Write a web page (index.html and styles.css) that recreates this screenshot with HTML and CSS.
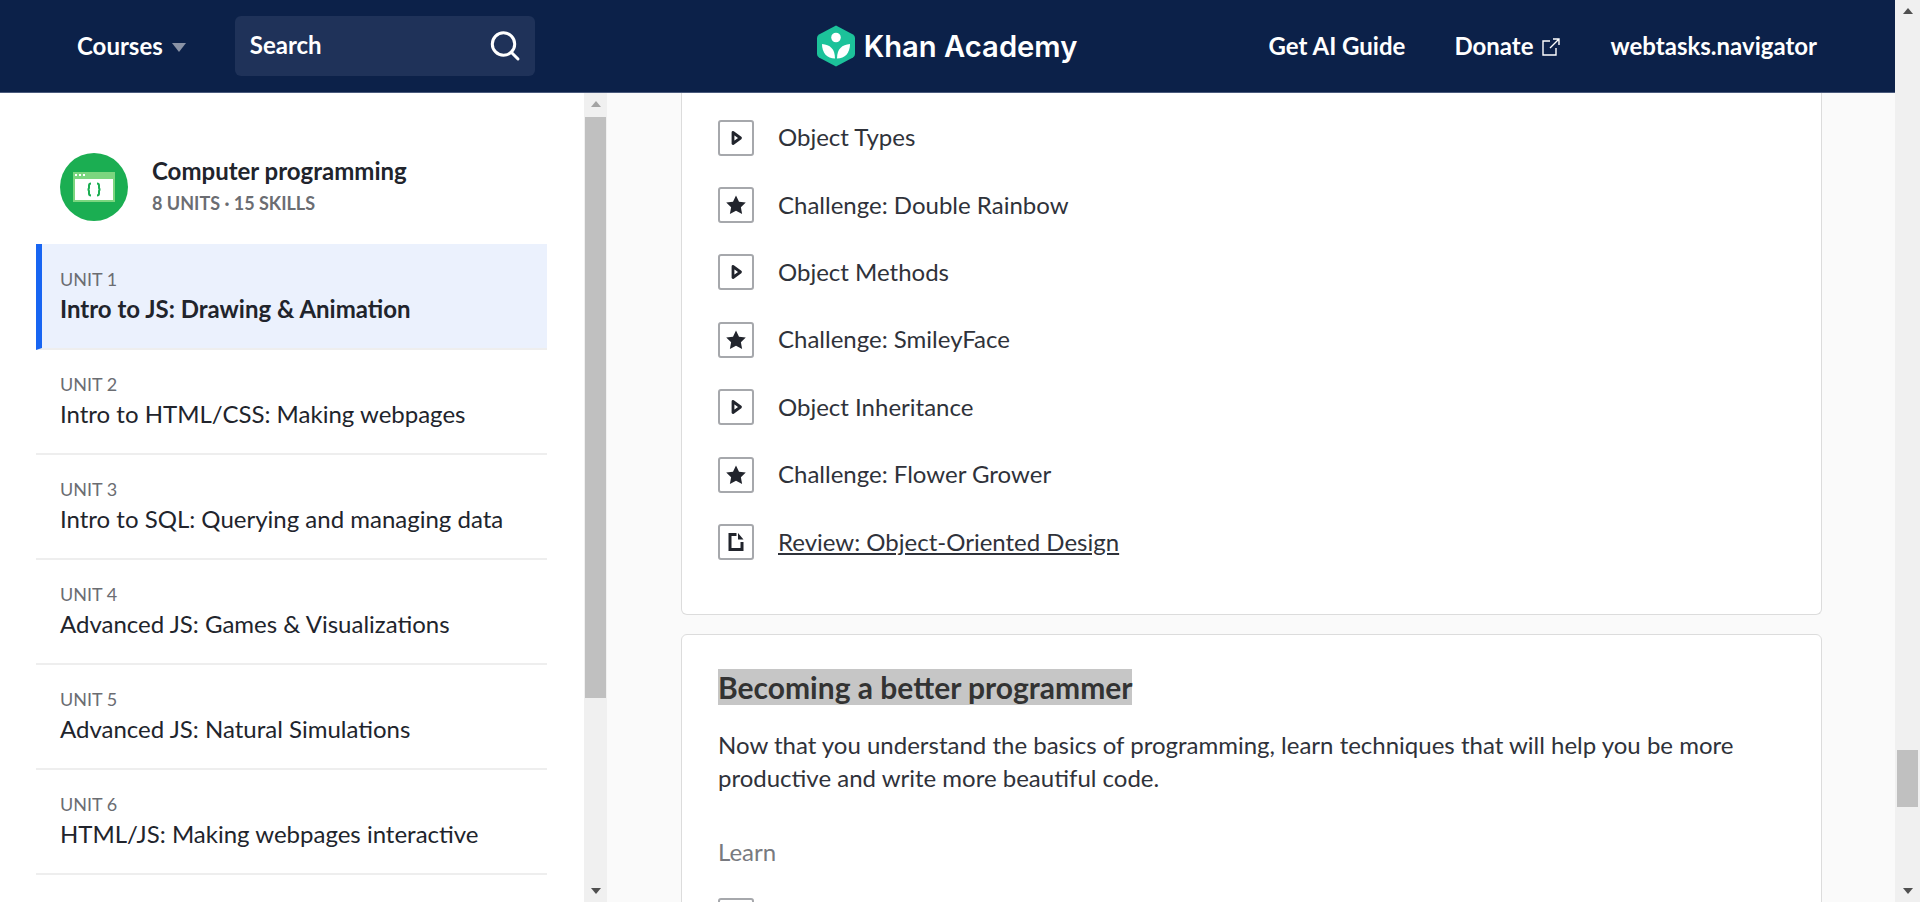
FILE: index.html
```html
<!DOCTYPE html>
<html>
<head>
    <meta charset="utf-8">
    <title>Computer programming | Khan Academy</title>
    <link rel="stylesheet" href="styles.css">
</head>
<body>
    <div class="page">
        <div class="page-body">
            <header class="topbar">
                <div class="topbar-left">
                    <a class="courses">Courses<span class="caret"></span></a>
                    <div class="search">
                        <span>Search</span>
                        <svg width="32" height="32" viewBox="0 0 32 32" fill="none" stroke="#fff" stroke-width="3" stroke-linecap="round"><circle cx="14.5" cy="14" r="11.2"/><path d="M22.5 22.5L29 29"/></svg>
                    </div>
                </div>
                <a class="logo">
                    <svg width="38" height="42" viewBox="0 0 38 42">
                        <path d="M19 0.5L36 9.5Q38 10.6 38 13V29Q38 31.4 36 32.5L19 41.5L2 32.5Q0 31.4 0 29V13Q0 10.6 2 9.5Z" fill="#1cc29a"/>
                        <circle cx="19" cy="12.500" r="4.800" fill="#fff"/>
                        <path d="M18 33.500C10 33.500 5 28 5 19C13 19.500 18 24 18 33.500Z" fill="#fff"/>
                        <path d="M20 33.500C28 33.500 33 28 33 19C25 19.500 20 24 20 33.500Z" fill="#fff"/>
                    </svg>
                    <span>Khan Academy</span>
                </a>
                <nav class="topbar-right">
                    <a>Get AI Guide</a>
                    <a class="donate">Donate
                        <svg width="20" height="20" viewBox="0 0 20 20" fill="none" stroke="#fff" stroke-width="1.4"><path d="M9 4H2V18H15V11"/><path d="M9 11L18 2M12 2H18V8"/></svg>
                    </a>
                    <a>webtasks.navigator</a>
                </nav>
            </header>
            <div class="content">
                <aside class="sidebar">
                    <div class="course-head">
                        <svg width="68" height="68" viewBox="0 0 68 68">
                            <circle cx="34" cy="34" r="34" fill="#1bae52"/>
                            <rect x="13" y="19" width="42" height="30" fill="#7bd67f"/>
                            <rect x="15" y="26" width="38" height="21" fill="#fff"/>
                            <rect x="15" y="21" width="2" height="2" fill="#fff"/>
                            <rect x="19" y="21" width="2" height="2" fill="#fff"/>
                            <rect x="23" y="21" width="2" height="2" fill="#fff"/>
                            <path d="M31 30.500Q29 30.500 29 32.500V34.500Q29 36.500 27.500 36.500Q29 36.500 29 38.500V40.500Q29 42.500 31 42.500M37 30.500Q39 30.500 39 32.500V34.500Q39 36.500 40.500 36.500Q39 36.500 39 38.500V40.500Q39 42.500 37 42.500" fill="none" stroke="#1bae52" stroke-width="2"/>
                        </svg>
                        <div class="course-info">
                            <div class="course-title">Computer programming</div>
                            <div class="course-sub">8 UNITS · 15 SKILLS</div>
                        </div>
                    </div>
                    <ul class="units">
                        <li class="unit active"><div class="unit-num">UNIT 1</div><div class="unit-name">Intro to JS: Drawing &amp; Animation</div></li>
                        <li class="unit"><div class="unit-num">UNIT 2</div><div class="unit-name">Intro to HTML/CSS: Making webpages</div></li>
                        <li class="unit"><div class="unit-num">UNIT 3</div><div class="unit-name">Intro to SQL: Querying and managing data</div></li>
                        <li class="unit"><div class="unit-num">UNIT 4</div><div class="unit-name">Advanced JS: Games &amp; Visualizations</div></li>
                        <li class="unit"><div class="unit-num">UNIT 5</div><div class="unit-name">Advanced JS: Natural Simulations</div></li>
                        <li class="unit"><div class="unit-num">UNIT 6</div><div class="unit-name">HTML/JS: Making webpages interactive</div></li>
                    </ul>
                </aside>
                <div class="scrollbar side-scroll">
                    <span class="arrow-up"></span>
                    <span class="thumb side-thumb"></span>
                    <span class="arrow-down"></span>
                </div>
                <main class="main">
                    <section class="card card-cut">
                        <ul class="items">
                            <li class="item"><span class="item-icon"><svg class="i-play" viewBox="0 0 20 20"><path d="M7 4.500L14.500 10L7 15.500Z"/></svg></span>Object Types</li>
                            <li class="item"><span class="item-icon"><svg class="i-star" viewBox="1 1 18 18"><path d="M10 1.500L12.700 7L18.800 7.800L14.400 12L15.500 18L10 15.100L4.500 18L5.600 12L1.200 7.800L7.300 7Z"/></svg></span>Challenge: Double Rainbow</li>
                            <li class="item"><span class="item-icon"><svg class="i-play" viewBox="0 0 20 20"><path d="M7 4.500L14.500 10L7 15.500Z"/></svg></span>Object Methods</li>
                            <li class="item"><span class="item-icon"><svg class="i-star" viewBox="1 1 18 18"><path d="M10 1.500L12.700 7L18.800 7.800L14.400 12L15.500 18L10 15.100L4.500 18L5.600 12L1.200 7.800L7.300 7Z"/></svg></span>Challenge: SmileyFace</li>
                            <li class="item"><span class="item-icon"><svg class="i-play" viewBox="0 0 20 20"><path d="M7 4.500L14.500 10L7 15.500Z"/></svg></span>Object Inheritance</li>
                            <li class="item"><span class="item-icon"><svg class="i-star" viewBox="1 1 18 18"><path d="M10 1.500L12.700 7L18.800 7.800L14.400 12L15.500 18L10 15.100L4.500 18L5.600 12L1.200 7.800L7.300 7Z"/></svg></span>Challenge: Flower Grower</li>
                            <li class="item"><span class="item-icon"><svg class="i-doc" viewBox="0 0 20 20"><path class="doc-line" d="M10.500 2.500H4V17.500H16V10"/><path d="M12 1L17.500 7.500H12Z"/></svg></span><a class="item-link">Review: Object-Oriented Design</a></li>
                        </ul>
                    </section>
                    <section class="card">
                        <h2 class="card-title"><span class="selected">Becoming a better programmer</span></h2>
                        <p class="card-text">Now that you understand the basics of programming, learn techniques that will help you be more productive and write more beautiful code.</p>
                        <div class="card-label">Learn</div>
                        <span class="item-icon"></span>
                    </section>
                </main>
            </div>
        </div>
        <div class="scrollbar page-scroll">
            <span class="arrow-up"></span>
            <span class="thumb page-thumb"></span>
            <span class="arrow-down"></span>
        </div>
    </div>
</body>
</html>
```

FILE: styles.css
```css
* {
    box-sizing: border-box;
}
html,
body {
    height: 100%;
    margin: 0;
    overflow: hidden;
}
body {
    font-family: "Lato", "Liberation Sans", sans-serif;
    font-size: 24px;
    color: #2f323a;
    background: #fff;
}
ul {
    list-style: none;
    margin: 0;
    padding: 0;
}
.page {
    display: flex;
    height: 100%;
}
.page-body {
    display: flex;
    flex-direction: column;
    flex: 1;
    min-width: 0;
}

/* header */
.topbar {
    display: grid;
    grid-template-columns: 1fr auto 1fr;
    align-items: center;
    flex: none;
    height: 93px;
    padding: 0 78px 0 77px;
    background: #0c2149;
    border-bottom: 1px solid #4a5a7c;
    color: #fff;
    font-weight: 700;
}
.topbar-left {
    display: flex;
    align-items: center;
}
.courses {
    display: flex;
    align-items: center;
    margin-top: -2px;
}
.caret {
    margin: 5px 0 0 9px;
    border-top: 9px solid #8a93a6;
    border-left: 7.500px solid transparent;
    border-right: 7.500px solid transparent;
}
.search {
    display: flex;
    justify-content: space-between;
    align-items: center;
    width: 300px;
    height: 60px;
    margin-left: 49px;
    padding: 0 14px 0 15px;
    background: #1f3259;
    border-radius: 6px;
}
.search span {
    margin-top: -4px;
}
.logo {
    display: flex;
    align-items: center;
    gap: 9px;
    font-family: "Inter", "Lato", sans-serif;
    font-size: 29.200px;
    font-weight: 600;
}
.topbar-right {
    display: flex;
    justify-content: flex-end;
    gap: 49px;
    margin-top: -2px;
}
.donate {
    display: flex;
    align-items: center;
    gap: 8px;
}
.donate svg {
    margin-top: 3px;
}

/* scrollbars */
.scrollbar {
    display: flex;
    flex-direction: column;
    align-items: center;
    flex: none;
    background: #f0f0f0;
}
.side-scroll {
    width: 23px;
}
.page-scroll {
    width: 25px;
}
.thumb {
    display: block;
    background: #c0c0c0;
}
.side-thumb {
    width: 21px;
    height: 581px;
    margin-top: 10px;
}
.page-thumb {
    width: 21px;
    height: 57px;
    margin-top: 736px;
}
.arrow-up {
    margin-top: 8px;
    border-bottom: 6px solid #a3a3a3;
    border-left: 5.500px solid transparent;
    border-right: 5.500px solid transparent;
}
.page-scroll .arrow-up {
    border-bottom-color: #505050;
}
.arrow-down {
    margin-top: auto;
    margin-bottom: 8px;
    border-top: 6px solid #505050;
    border-left: 5.500px solid transparent;
    border-right: 5.500px solid transparent;
}

/* sidebar */
.content {
    display: flex;
    flex: 1;
    min-height: 0;
}
.sidebar {
    flex: none;
    width: 584px;
    padding: 60px 37px 0 36px;
    background: #fff;
}
.course-head {
    display: flex;
    align-items: flex-start;
    gap: 24px;
    padding-left: 24px;
    height: 92px;
}
.course-info {
    padding-top: 3px;
}
.course-title {
    font-size: 24px;
    font-weight: 700;
    line-height: 30px;
    color: #21242c;
}
.course-sub {
    margin-top: 6px;
    font-size: 18px;
    font-weight: 700;
    line-height: 22px;
    color: #6b6d72;
}
.unit {
    height: 105px;
    padding: 22px 0 0 24px;
    border-bottom: 2px solid #eeeeee;
}
.active {
    height: 106px;
    margin-top: -1px;
    padding: 23px 0 0 18px;
    background: #ebf1fd;
    border-left: 6px solid #1865f2;
}
.unit-num {
    font-size: 18px;
    line-height: 24px;
    color: #6b6d72;
}
.unit-name {
    margin-top: 3px;
    line-height: 30px;
    color: #21242c;
}
.active .unit-name {
    font-weight: 700;
}

/* main column */
.main {
    flex: 1;
    min-width: 0;
    padding: 0 73px 0 74px;
    background: #fafafa;
    overflow: hidden;
}
.card {
    margin-bottom: 19px;
    padding: 0 36px;
    background: #fff;
    border: 1px solid #dcdcdc;
    border-radius: 6px;
}
.card-cut {
    height: 522px;
    border-top: 0;
    border-radius: 0 0 6px 6px;
}
.items {
    padding-top: 11px;
}
.item {
    display: flex;
    align-items: center;
    gap: 24px;
    height: 67.400px;
    padding-bottom: 2px;
}
.item-icon {
    display: flex;
    align-items: center;
    justify-content: center;
    flex: none;
    width: 36px;
    height: 36px;
    margin-top: 2px;
    background: #fff;
    border: 2px solid #a6a8ac;
    border-radius: 3px;
}
.item-icon svg {
    width: 20px;
    height: 20px;
}
.i-play {
    fill: #fff;
    stroke: #21242c;
    stroke-width: 2.800;
    stroke-linejoin: round;
}
.i-star {
    fill: #21242c;
}
.i-doc {
    fill: #21242c;
}
.doc-line {
    fill: none;
    stroke: #21242c;
    stroke-width: 3;
}
.item-link {
    text-decoration: underline;
}
.card-title {
    margin: 34px 0 0;
    font-size: 30px;
    font-weight: 700;
    line-height: 36px;
    color: #333333;
}
.selected {
    background: #c6c6c6;
}
.card-text {
    margin: 23px 0 0;
    line-height: 33px;
}
.card-label {
    margin-top: 41px;
    line-height: 33px;
    color: #787a80;
}
.card .card-label + .item-icon {
    margin-top: 30px;
}
```
